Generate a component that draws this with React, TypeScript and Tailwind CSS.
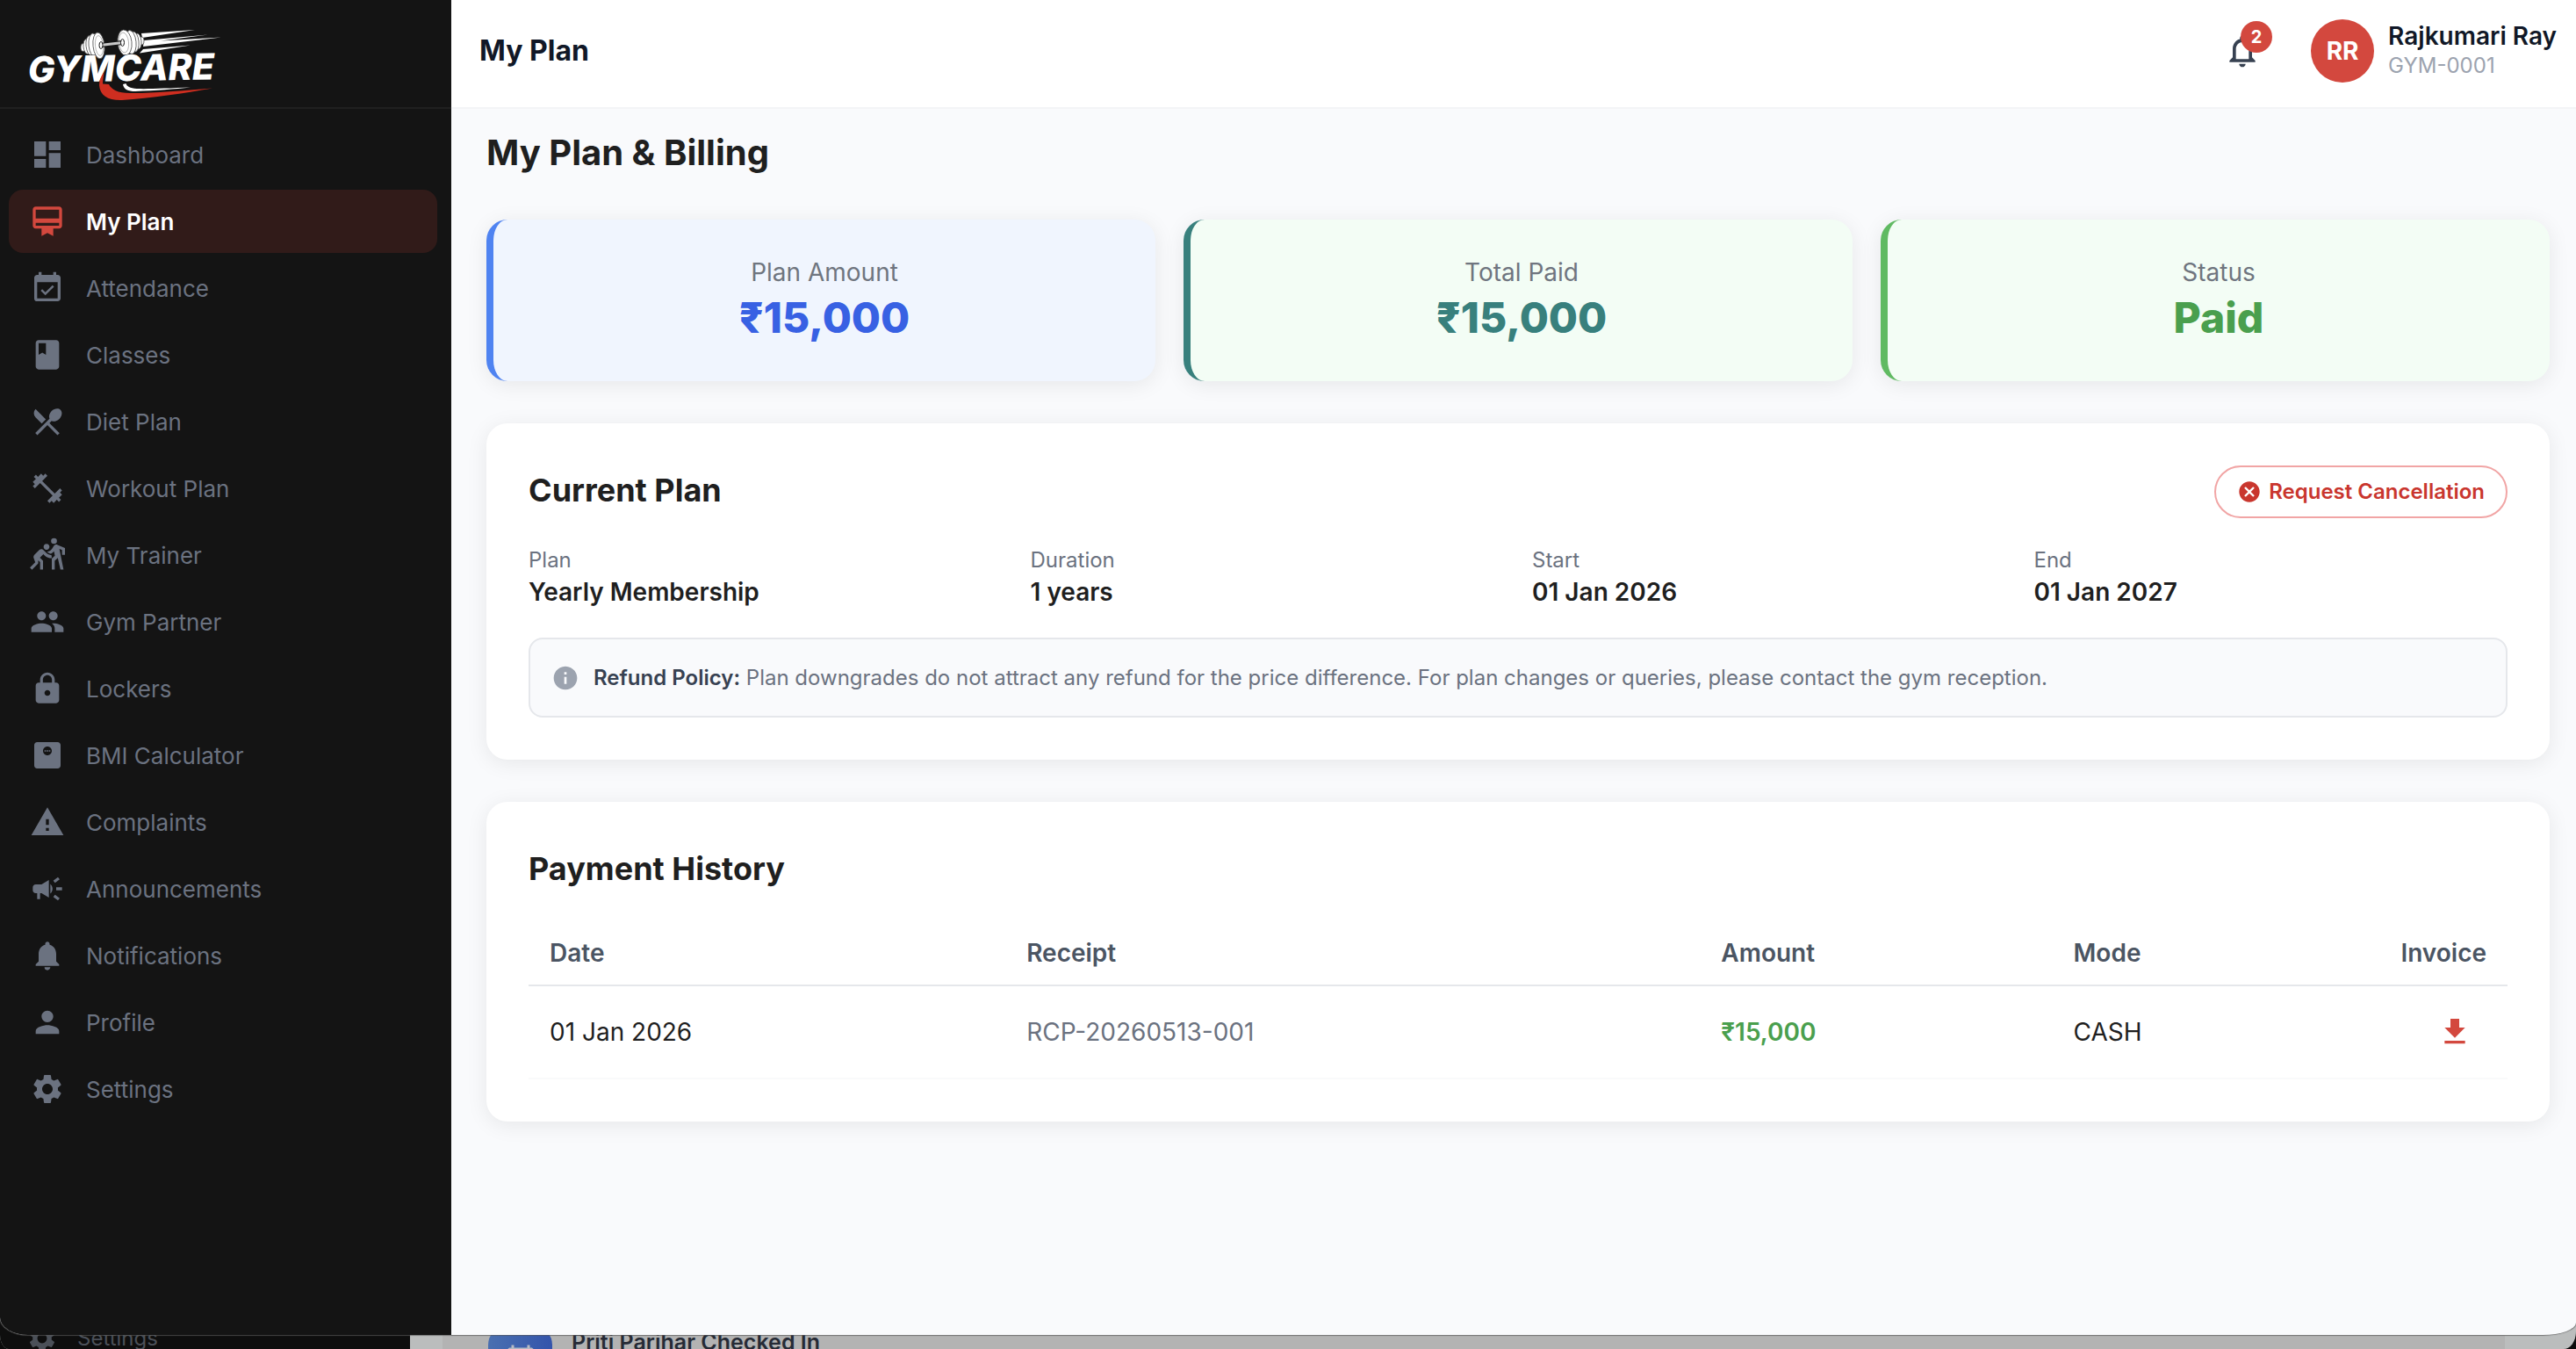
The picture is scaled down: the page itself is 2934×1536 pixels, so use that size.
import type { IconType } from 'react-icons';
import {
	MdCalendarToday, MdCampaign, MdCancel, MdCardMembership, MdClass, MdDashboard, MdDownload, MdEventAvailable,
	MdFitnessCenter, MdInfo, MdLock, MdMonitorWeight, MdNotifications, MdNotificationsNone, MdPeople,
	MdPerson, MdRestaurantMenu, MdSettings, MdSportsKabaddi, MdWarning,
} from 'react-icons/md';

const NAV: { label: string; icon: IconType; active?: boolean }[] = [
	{ label: 'Dashboard', icon: MdDashboard },
	{ label: 'My Plan', icon: MdCardMembership, active: true },
	{ label: 'Attendance', icon: MdEventAvailable },
	{ label: 'Classes', icon: MdClass },
	{ label: 'Diet Plan', icon: MdRestaurantMenu },
	{ label: 'Workout Plan', icon: MdFitnessCenter },
	{ label: 'My Trainer', icon: MdSportsKabaddi },
	{ label: 'Gym Partner', icon: MdPeople },
	{ label: 'Lockers', icon: MdLock },
	{ label: 'BMI Calculator', icon: MdMonitorWeight },
	{ label: 'Complaints', icon: MdWarning },
	{ label: 'Announcements', icon: MdCampaign },
	{ label: 'Notifications', icon: MdNotifications },
	{ label: 'Profile', icon: MdPerson },
	{ label: 'Settings', icon: MdSettings },
];

const STATS = [
	{ label: 'Plan Amount', value: '₹15,000', box: 'border-[#4f83f1] bg-[#f0f5fe]', text: 'text-[#3861e3]' },
	{ label: 'Total Paid', value: '₹15,000', box: 'border-[#38807d] bg-[#f3fdf5]', text: 'text-[#38807d]' },
	{ label: 'Status', value: 'Paid', box: 'border-[#60ba62] bg-[#f3fdf5]', text: 'text-[#4a9f4e]' },
];

const DETAILS = [
	{ label: 'Plan', value: 'Yearly Membership' },
	{ label: 'Duration', value: '1 years' },
	{ label: 'Start', value: '01 Jan 2026' },
	{ label: 'End', value: '01 Jan 2027' },
];

const PAYMENTS = [
	{ date: '01 Jan 2026', receipt: 'RCP-20260513-001', amount: '₹15,000', mode: 'CASH' },
];

const CARD = 'rounded-3xl bg-white p-12 shadow-[0_4px_24px_rgba(0,0,0,0.08)]';

export default function App() {
	return (
		<div className="relative h-screen overflow-hidden bg-[#0b0b0b] font-[Inter,sans-serif] text-[#1f1f1f]">
			<BackWindow />
			<div className="relative flex h-[calc(100vh-16px)] overflow-hidden rounded-[0_0_38px_32px/0_0_14px_20px] bg-[#f9fafc] shadow-[0_0_1px_1px_rgba(90,90,90,0.7)]">
				<Sidebar />
				<div className="flex min-w-0 flex-1 flex-col">
					<TopBar />
					<main className="flex-1 pt-6 pr-[30px] pl-10">
						<h1 className="mb-[50px] text-[40px] leading-[52px] font-bold">My Plan &amp; Billing</h1>
						<div className="mb-12 grid grid-cols-3 gap-8">
							{STATS.map((s) => (
								<div key={s.label} className={`rounded-3xl border-l-8 py-10 text-center shadow-[0_4px_24px_rgba(0,0,0,0.08)] ${s.box}`}>
									<div className="text-[28px] leading-10 text-[#6f757f]">{s.label}</div>
									<div className={`text-5xl leading-[64px] font-extrabold ${s.text}`}>{s.value}</div>
								</div>
							))}
						</div>
						<CurrentPlan />
						<PaymentHistory />
					</main>
				</div>
			</div>
		</div>
	);
}

function Sidebar() {
	return (
		<aside className="w-[514px] shrink-0 bg-[#141414]">
			<div className="h-[124px] border-b-2 border-[#202020] pl-[30px]">
				<Logo />
			</div>
			<nav className="flex flex-col gap-1 pt-4 pr-4 pl-2.5">
				{NAV.map(({ label, icon: Icon, active }) => (
					<a
						key={label}
						href="#"
						className={`flex h-[72px] items-center gap-6 rounded-2xl pl-6 text-[26px] ${active ? 'bg-[#311b19] font-semibold text-white' : 'text-[#6b7280]'}`}
					>
						<Icon size={40} className={active ? 'text-[#d3483e]' : ''} />
						{label}
					</a>
				))}
			</nav>
		</aside>
	);
}

function TopBar() {
	return (
		<header className="flex h-[124px] items-center justify-between border-b-2 border-[#f3f4f6] bg-white pr-[22px] pb-1.5 pl-8 text-[#111827]">
			<div className="text-[32px] leading-10 font-bold">My Plan</div>
			<div className="flex items-center">
				<button aria-label="Notifications" className="relative mr-14 text-[#374151]">
					<MdNotificationsNone size={44} />
					<span className="absolute -top-3 -right-3 flex size-9 items-center justify-center rounded-full bg-[#d3483e] text-xl font-bold text-white">2</span>
				</button>
				<div className="mr-4 flex size-[72px] items-center justify-center rounded-full bg-[#d3483e] text-[28px] font-bold text-white">RR</div>
				<div>
					<div className="text-[28px] leading-[34px] font-semibold">Rajkumari Ray</div>
					<div className="text-2xl leading-[34px] text-[#9ca3af]">GYM-0001</div>
				</div>
			</div>
		</header>
	);
}

function CurrentPlan() {
	return (
		<section className={`mb-12 ${CARD}`}>
			<div className="flex items-start justify-between">
				<h2 className="text-4xl leading-[56px] font-bold">Current Plan</h2>
				<button className="flex h-[60px] items-center gap-2 rounded-full border-2 border-[#f1a5a5] px-6 text-2xl font-semibold text-[#c9362e]">
					<MdCancel size={28} />
					Request Cancellation
				</button>
			</div>
			<dl className="mt-7 grid grid-cols-4 gap-8">
				{DETAILS.map((d) => (
					<div key={d.label}>
						<dt className="text-2xl leading-10 text-[#6b7280]">{d.label}</dt>
						<dd className="text-[28px] leading-8 font-semibold">{d.value}</dd>
					</div>
				))}
			</dl>
			<div className="mt-9 flex items-center gap-4 rounded-2xl border-2 border-[#e5e7eb] bg-[#f9fafc] px-6 py-[26px]">
				<MdInfo size={32} className="shrink-0 text-[#9ca3af]" />
				<p className="text-2xl leading-[35px] text-[#6b7280]">
					<strong className="font-semibold text-[#374151]">Refund Policy:</strong> Plan downgrades do not attract any refund for the price difference. For plan changes or queries, please contact the gym reception.
				</p>
			</div>
		</section>
	);
}

function PaymentHistory() {
	return (
		<section className={CARD}>
			<h2 className="text-4xl leading-[56px] font-bold">Payment History</h2>
			<table className="mt-8 w-full table-fixed text-left text-[28px]">
				<thead>
					<tr className="h-[73px] border-b-2 border-[#e5e7eb] text-[#4b5563]">
						<th className="w-[24.1%] px-6 font-semibold">Date</th>
						<th className="w-[35.1%] px-6 font-semibold">Receipt</th>
						<th className="w-[17.8%] px-6 font-semibold">Amount</th>
						<th className="px-6 font-semibold">Mode</th>
						<th className="px-6 text-right font-semibold">Invoice</th>
					</tr>
				</thead>
				<tbody>
					{PAYMENTS.map((p) => (
						<tr key={p.receipt} className="h-[106px] border-b-2 border-[#f9fafb]">
							<td className="px-6">{p.date}</td>
							<td className="px-6 text-[#6b7280]">{p.receipt}</td>
							<td className="px-6 font-semibold text-[#4a9f4e]">{p.amount}</td>
							<td className="px-6">{p.mode}</td>
							<td className="px-6 text-right">
								<button aria-label="Download invoice" className="rounded-full p-4 align-middle text-[#d3483e]">
									<MdDownload size={40} />
								</button>
							</td>
						</tr>
					))}
				</tbody>
			</table>
		</section>
	);
}

// Second app window; only its last few pixels show under the front one.
function BackWindow() {
	return (
		<div className="absolute inset-0 flex items-stretch overflow-hidden rounded-[0_0_14px_10px/0_0_20px_16px] bg-[#bbbdbd]">
			<div className="flex w-[467px] shrink-0 items-end bg-[#0e0e0e] pl-[30px] text-2xl text-[#4b5058]">
				<div className="-mb-2 flex items-center gap-[22px]">
					<MdSettings size={36} />
					<span className="leading-10">Settings</span>
				</div>
			</div>
			<div className="flex flex-1 items-end pr-[81px] pl-[37px]">
				<div className="flex h-full flex-1 items-end bg-[#b3b3b3] pl-[52px]">
					<div className="-mb-12 flex gap-[22px]">
						<div className="flex size-[73px] items-center justify-center rounded-[20px] bg-linear-to-r from-[#4a6fb0] to-[#3454ab] text-[#b7bbc4]">
							<MdCalendarToday size={36} />
						</div>
						<div className="text-[25px] leading-[34px] font-semibold text-[#262b36]">Priti Parihar Checked In</div>
					</div>
				</div>
			</div>
		</div>
	);
}

function Logo() {
	return (
		<svg width="226" height="122" viewBox="30 0 226 122" fill="#fff" role="img" aria-label="Gymcare">
			{/* speed lines */}
			<path d="M161 38 L222 34 L162 43 Z" />
			<path d="M164 46 L237 39.500 L183 46.500 L252 42.500 L163 53 Z" />
			<path d="M163 56 L217 51.500 L159 60.500 Z" />
			{/* dumbbell */}
			<g stroke="#4a4a4a" strokeWidth="0.800">
				<ellipse cx="95" cy="54" rx="3" ry="4.500" />
				<ellipse cx="99" cy="53" rx="4" ry="8.500" transform="rotate(-6 99 53)" />
				<ellipse cx="103" cy="52" rx="5" ry="11.500" transform="rotate(-6 103 52)" />
				<ellipse cx="107" cy="51.500" rx="6" ry="13.500" transform="rotate(-6 107 51)" />
				<ellipse cx="112.500" cy="52" rx="6.500" ry="15" transform="rotate(-6 112 52)" />
				<ellipse cx="161" cy="46.500" rx="3" ry="4.500" />
				<ellipse cx="157" cy="47" rx="4" ry="9" transform="rotate(-6 157 47)" />
				<ellipse cx="153" cy="47.500" rx="5" ry="11.500" transform="rotate(-6 153 47)" />
				<ellipse cx="149" cy="48" rx="6" ry="13.500" transform="rotate(-6 149 48)" />
				<ellipse cx="142" cy="48.500" rx="8" ry="14.500" transform="rotate(-6 142 48)" />
			</g>
			<g fill="none" stroke="#9a9a9a" strokeWidth="0.700">
				<ellipse cx="113" cy="52" rx="4.500" ry="11.500" transform="rotate(-6 113 52)" />
				<ellipse cx="141" cy="48.500" rx="5.500" ry="11.500" transform="rotate(-6 141 48)" />
			</g>
			<path d="M115 51.500 L139 48.500" stroke="#141414" strokeWidth="5" />
			<path d="M114 51.500 L140 48.500" stroke="#c9c9c9" strokeWidth="3" />
			<ellipse cx="115" cy="51.500" rx="2" ry="4" stroke="#141414" />
			<ellipse cx="139.500" cy="48.500" rx="2" ry="4" stroke="#141414" />
			<text
				x="32"
				y="94"
				transform="rotate(-1 32 94)"
				className="font-[Inter,sans-serif] text-[41px] font-extrabold italic"
				stroke="#141414"
				strokeWidth="1"
				paintOrder="stroke"
			>
				GYMCARE
			</text>
			{/* swooshes */}
			<path fill="#cf2e20" d="M118.500 82 C115 87 113 92 113 97 C114 109 123 114.500 139 114 C172 112 210 106 242 100.500 C205 103.500 170 106.500 148 106 C134 106 127 102 124 96 L117 95.500 C117 91 118 87 118.500 82 Z" />
			<path d="M140 96 C141 102 146 104 154 104 C178 103 198 101.500 217 99.500 C190 100.500 168 101.500 156 101 C148 100.500 144 98 143.500 95 Z" />
		</svg>
	);
}
